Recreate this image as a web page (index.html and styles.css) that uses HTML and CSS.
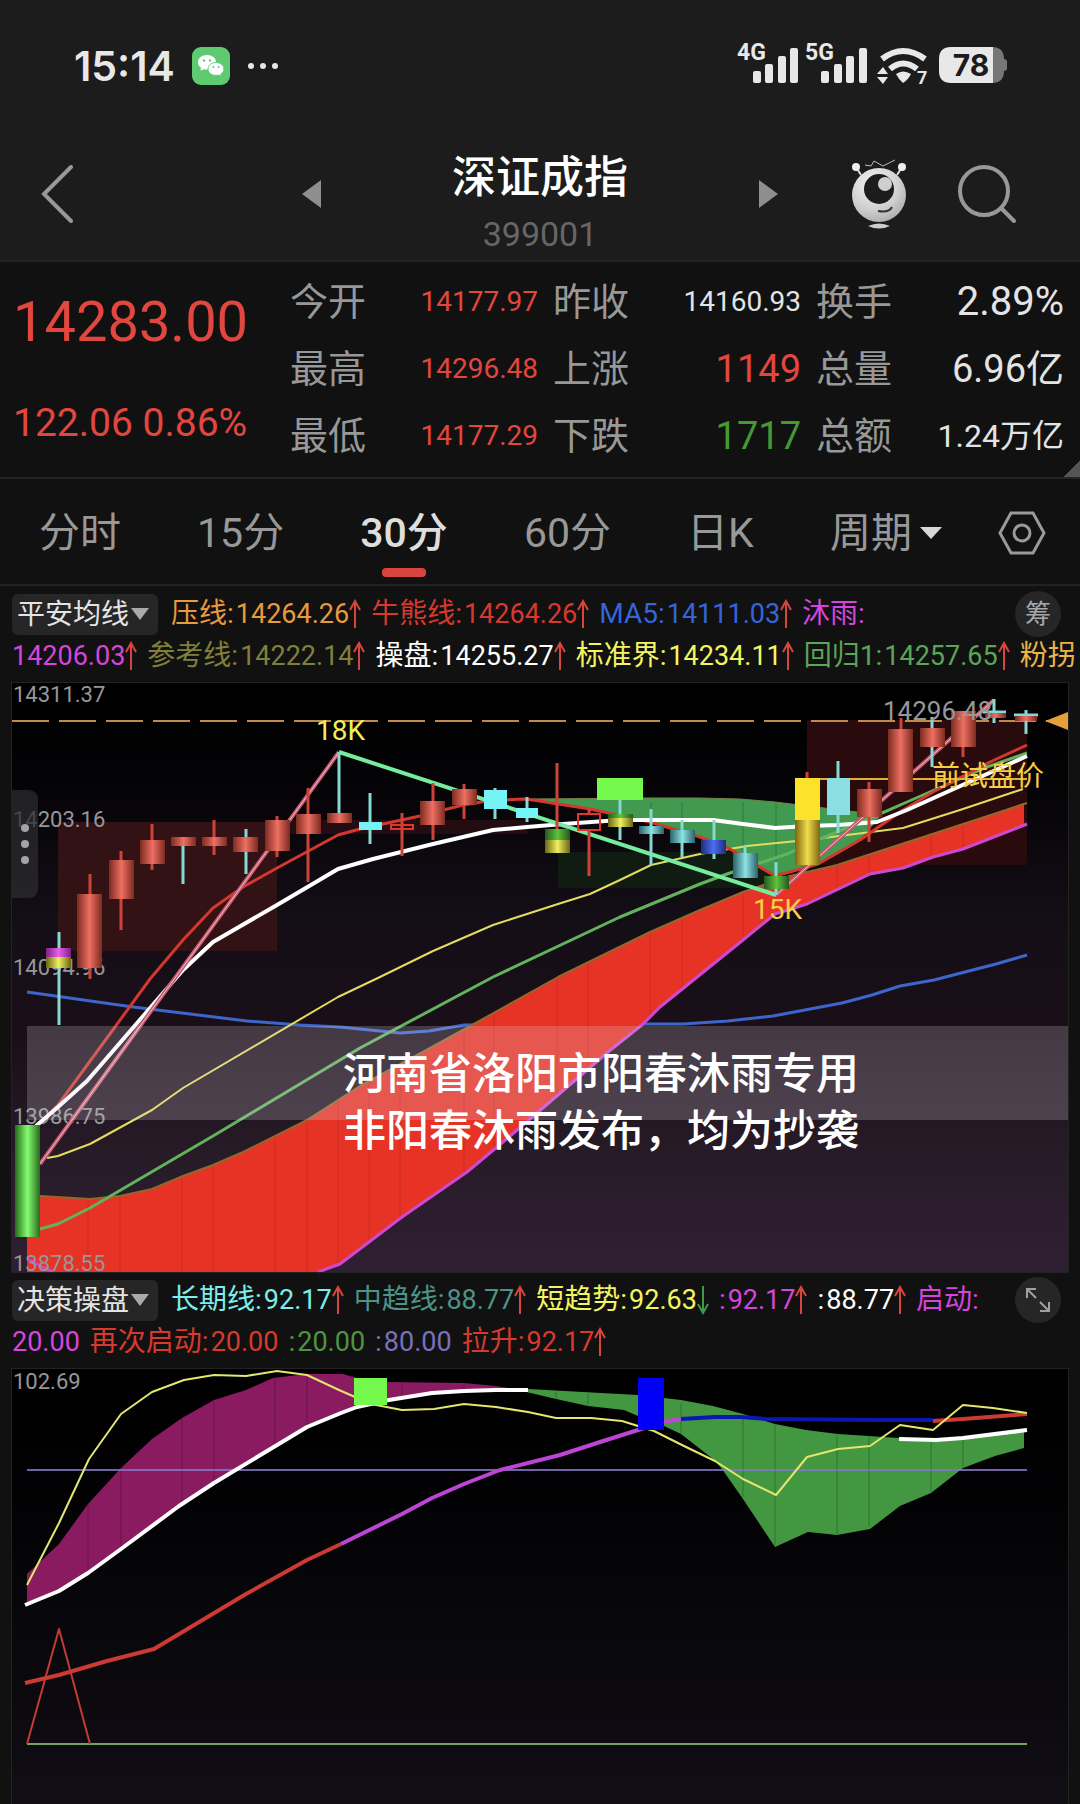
FILE: index.html
```html
<!DOCTYPE html>
<html lang="zh-CN">
<head>
<meta charset="utf-8">
<meta name="viewport" content="width=device-width, initial-scale=1">
<title>深证成指 399001</title>
<link rel="stylesheet" href="styles.css">
</head>
<body>
<header class="top">
  <div class="status">
    <div class="status-left">
      <span class="clock">15:14</span>
      <svg class="wechat" viewBox="0 0 38 38" aria-hidden="true">
        <rect width="38" height="38" rx="9" fill="#5fcb70"/>
        <path d="M15 8c-5.200 0-9 3.200-9 7.300 0 2.400 1.200 4.300 3.200 5.700l-.9 2.800 3.300-1.600c1 .3 2.200.4 3.400.4 5.200 0 9-3 9-7.300S20.200 8 15 8z" fill="#fff"/>
        <path d="M24 15.500c-4.600 0-8 2.800-8 6.500s3.400 6.400 8 6.400c1 0 2-.1 2.900-.4l2.700 1.400-.7-2.400c1.900-1.300 3-3 3-5 0-3.700-3.400-6.500-7.900-6.500z" fill="#fff" stroke="#5fcb70"/>
        <g fill="#5fcb70"><circle cx="12" cy="13.500" r="1.200"/><circle cx="18" cy="13.500" r="1.200"/><circle cx="21.500" cy="20" r="1"/><circle cx="26.500" cy="20" r="1"/></g>
      </svg>
      <svg class="dots" viewBox="0 0 32 8" aria-hidden="true"><g fill="#e6e6e6"><circle cx="4" cy="4" r="3"/><circle cx="16" cy="4" r="3"/><circle cx="28" cy="4" r="3"/></g></svg>
    </div>
    <svg class="radio" viewBox="0 0 280 60" role="img" aria-label="信号与电量">
      <g fill="#e8e8e8">
        <text x="7" y="24" class="net">4G</text>
        <rect x="23" y="35" width="8" height="12" rx="2"/><rect x="35" y="28" width="8" height="19" rx="2"/><rect x="48" y="20" width="8" height="27" rx="2"/><rect x="60" y="12" width="8" height="35" rx="2"/>
        <text x="75" y="24" class="net">5G</text>
        <rect x="91" y="35" width="8" height="12" rx="2"/><rect x="104" y="28" width="8" height="19" rx="2"/><rect x="116" y="20" width="8" height="27" rx="2"/><rect x="129" y="12" width="8" height="35" rx="2"/>
        <path d="M166 38Q173 33 181 38Q178 44 173 47Q169 44 166 38z"/>
        <path d="M147 38L153 31L158 38zM147 41L153 48L158 41z"/>
        <text x="187" y="48" class="gen">7</text>
        <path d="M260 11h2q12 0 12 12q3 0 3 3v6q0 3-3 3q0 12-12 12h-2z" fill="#777"/>
        <path d="M263 11H221q-12 0-12 12v12q0 12 12 12h42z"/>
        <text x="241" y="40" class="pct">78</text>
      </g>
      <path d="M152 23Q173 7 195 23M160 33Q173 22 187 33" fill="none" stroke="#e8e8e8" stroke-width="6"/>
    </svg>
  </div>
  <nav class="bar">
    <button class="icon-btn back" aria-label="返回"><svg width="34" height="58" viewBox="0 0 34 58"><path d="M31 2L4 29L31 56" fill="none" stroke="#989898" stroke-width="4" stroke-linecap="round"/></svg></button>
    <div class="switcher">
      <button class="icon-btn" aria-label="上一只"><svg width="20" height="28" viewBox="0 0 20 28"><path d="M20 0V28L1 14z" fill="#8e8e8e"/></svg></button>
      <div class="heading"><h1>深证成指</h1><span class="code">399001</span></div>
      <button class="icon-btn" aria-label="下一只"><svg width="20" height="28" viewBox="0 0 20 28"><path d="M0 0V28L19 14z" fill="#8e8e8e"/></svg></button>
    </div>
    <div class="tools">
      <button class="icon-btn" aria-label="智能助手"><svg width="56" height="70" viewBox="0 0 56 70">
        <defs><radialGradient id="ball" cx=".4" cy=".3" r=".8"><stop offset="0" stop-color="#f4f4f4"/><stop offset=".6" stop-color="#cfcfcf"/><stop offset="1" stop-color="#a4a4a4"/></radialGradient></defs>
        <path d="M5 8L10 16M51 8L46 16" stroke="#ddd" stroke-width="2"/>
        <path d="M14 6l6 1 3-5 9 5 12-6" fill="none" stroke="#bbb"/>
        <circle cx="5" cy="8" r="4" fill="#eee"/><circle cx="51" cy="8" r="4" fill="#eee"/>
        <circle cx="28" cy="36" r="27" fill="url(#ball)"/>
        <circle cx="28" cy="30" r="15" fill="#1c1c1c"/><circle cx="34" cy="25" r="7" fill="#cfcfcf"/>
        <path d="M27 52Q38 54 41 48" fill="none" stroke="#333" stroke-width="2"/>
        <path d="M17 67q11-5 22 0q-11 5-22 0z" fill="#ccc"/>
      </svg></button>
      <button class="icon-btn" aria-label="搜索"><svg width="60" height="60" viewBox="0 0 60 60" fill="none" stroke="#989898" stroke-width="4" stroke-linecap="round"><circle cx="27" cy="27" r="24"/><path d="M44 44L57 57"/></svg></button>
    </div>
  </nav>
</header>

<section class="quote">
  <div class="price"><strong>14283.00</strong><span>122.06 0.86%</span></div>
  <dl class="stats">
    <div><dt>今开</dt><dd class="s up">14177.97</dd></div>
    <div><dt>昨收</dt><dd class="s">14160.93</dd></div>
    <div><dt>换手</dt><dd class="l">2.89%</dd></div>
    <div><dt>最高</dt><dd class="s up">14296.48</dd></div>
    <div><dt>上涨</dt><dd class="m up">1149</dd></div>
    <div><dt>总量</dt><dd class="m">6.96亿</dd></div>
    <div><dt>最低</dt><dd class="s up">14177.29</dd></div>
    <div><dt>下跌</dt><dd class="m down">1717</dd></div>
    <div><dt>总额</dt><dd class="w">1.24万亿</dd></div>
  </dl>
  <span class="corner"></span>
</section>

<nav class="tabs">
  <button>分时</button><button>15分</button><button class="on">30分</button><button>60分</button><button>日K</button>
  <button>周期<svg width="22" height="14" viewBox="0 0 22 14"><path d="M0 1H22L11 13z" fill="#d8d8d8"/></svg></button>
  <button class="gear" aria-label="设置"><svg width="48" height="44" viewBox="0 0 48 44" fill="none" stroke="#9a9a9a" stroke-width="3"><path d="M13 2H35L46 22L35 42H13L2 22z"/><circle cx="24" cy="22" r="8"/></svg></button>
</nav>

<svg class="defs" aria-hidden="true">
  <symbol id="up" viewBox="0 0 12 30"><path d="M6 29V3M1 11L6 2L11 11" fill="none" stroke="#d8453c" stroke-width="2"/></symbol>
  <symbol id="down" viewBox="0 0 12 30"><path d="M6 1V27M1 19L6 28L11 19" fill="none" stroke="#3f9a48" stroke-width="2"/></symbol>
</svg>

<section class="ind">
  <div class="row">
    <button class="chip">平安均线<svg width="18" height="12" viewBox="0 0 18 12"><path d="M0 0H18L9 12z" fill="#aaa"/></svg></button>
    <span class="item orange">压线:<b>14264.26</b><svg><use href="#up"/></svg></span>
    <span class="item red">牛熊线:<b>14264.26</b><svg><use href="#up"/></svg></span>
    <span class="item blue">MA5:<b>14111.03</b><svg><use href="#up"/></svg></span>
    <span class="item violet">沐雨:</span>
    <button class="round">筹</button>
  </div>
  <div class="row">
    <span class="item violet first"><b>14206.03</b><svg><use href="#up"/></svg></span>
    <span class="item olive">参考线:<b>14222.14</b><svg><use href="#up"/></svg></span>
    <span class="item white">操盘:<b>14255.27</b><svg><use href="#up"/></svg></span>
    <span class="item yellow">标准界:<b>14234.11</b><svg><use href="#up"/></svg></span>
    <span class="item green">回归1:<b>14257.65</b><svg><use href="#up"/></svg></span>
    <span class="item gold">粉拐</span>
  </div>
</section>

<svg class="chart" viewBox="12 681 1056 589" role="img" aria-label="30分钟K线图">
  <defs>
    <linearGradient id="bg1" x2="0" y2="1"><stop offset="0" stop-color="#000"/><stop offset=".15" stop-color="#030204"/><stop offset=".4" stop-color="#140e17"/><stop offset=".6" stop-color="#1a0f18"/><stop offset=".8" stop-color="#271b28"/><stop offset="1" stop-color="#2f1f32"/></linearGradient>
    <linearGradient id="cr"><stop offset="0" stop-color="#7c2a1e"/><stop offset=".5" stop-color="#ee6f63"/><stop offset="1" stop-color="#7c2a1e"/></linearGradient>
    <linearGradient id="cg"><stop offset="0" stop-color="#246b1c"/><stop offset=".5" stop-color="#86fb70"/><stop offset="1" stop-color="#246b1c"/></linearGradient>
    <linearGradient id="cd"><stop offset="0" stop-color="#23591f"/><stop offset=".5" stop-color="#5fc23c"/><stop offset="1" stop-color="#23591f"/></linearGradient>
    <linearGradient id="cy"><stop offset="0" stop-color="#6a6414"/><stop offset=".5" stop-color="#eef060"/><stop offset="1" stop-color="#6a6414"/></linearGradient>
    <linearGradient id="co"><stop offset="0" stop-color="#7d6410"/><stop offset=".5" stop-color="#f3dc4c"/><stop offset="1" stop-color="#7d6410"/></linearGradient>
    <linearGradient id="cm"><stop offset="0" stop-color="#7d2087"/><stop offset=".5" stop-color="#e760ea"/><stop offset="1" stop-color="#7d2087"/></linearGradient>
    <linearGradient id="ct"><stop offset="0" stop-color="#2a6069"/><stop offset=".5" stop-color="#8be3e4"/><stop offset="1" stop-color="#2a6069"/></linearGradient>
    <linearGradient id="cb"><stop offset="0" stop-color="#1e2d80"/><stop offset=".5" stop-color="#4c6df0"/><stop offset="1" stop-color="#1e2d80"/></linearGradient>
  </defs>
  <rect x="12" y="681" width="1056" height="589" fill="url(#bg1)"/>
  <path d="M58 820H277V949H58z" fill="#331216"/>
  <path d="M277 818H528V832H277z" fill="#240c13"/>
  <path d="M558 850H776V886H558z" fill="#101c12"/>
  <path d="M807 718H1027V863H807z" fill="#290a0d"/>
  <g class="axis">
    <text x="13" y="700">14311.37</text><text x="13" y="825">14203.16</text><text x="13" y="973">14094.96</text><text x="13" y="1122">13986.75</text>
  </g>
  <path d="M12 719H1068" stroke="#c08a4a" stroke-width="2" stroke-dasharray="37 10"/>
  <path d="M1045 719L1068 710V728z" fill="#e5a03c"/>
  <path d="M530 797L643 796L700 796L740 797L775 800L857 810L885 809L860 838L818 862L775 874L730 847L700 835L650 820L590 807z" fill="#419a50"/>
  <path d="M530 797L643 796L700 796L740 797L775 800L857 810" fill="none" stroke="#75814a"/>
  <path d="M651 800V820M682 800V828M743 800V850M776 802V872" stroke="#2f7a3c"/>
  <g fill="none" stroke-linejoin="round">
    <path d="M27 990L133 1005L247 1019L300 1023L340 1025L400 1031L429 1029L464 1023L643 1022L683 1022L728 1019L773 1014L842 1001L872 993L900 984L934 978L996 962L1027 953" stroke="#3c66cc" stroke-width="3"/>
    <path d="M27 1195L40 1194L90 1197L120 1194L152 1187L183 1174L213 1163L243 1150L307 1118L360 1084L419 1052L472 1023L558 975L650 930L700 908L743 890L790 874L837 863L960 823L1024 801V823L963 847L933 855L903 866L870 872L807 902L775 912L743 938L660 1005L643 1022L608 1050L509 1135L467 1170L402 1215L340 1262L318 1270H27z" fill="#e63326"/>
    <path d="M88 1198V1270M120 1194V1270M182 1175V1270M213 1163V1270M275 1135V1270M307 1118V1270M338 1098V1262M369 1080V1240M400 1062V1216M464 1028V1172M494 1012V1148M557 976V1093M588 961V1067M650 930V1015M682 916V988M743 890V938M837 863V888M869 852V872M931 833V855M963 822V847" stroke="#c2281d" stroke-opacity=".7"/>
    <path d="M27 1195L40 1194L90 1197L120 1194L152 1187L183 1174L213 1163L243 1150L307 1118L360 1084L419 1052L472 1023L558 975L650 930L700 908L743 890L790 874L837 863L960 823L1027 801" stroke="#94672a" stroke-width="2"/>
    <path d="M27 1257L53 1270M318 1270L340 1262L402 1215L467 1170L509 1135L608 1050L643 1022L660 1005L743 938L775 912L807 902L870 872L903 866L933 855L963 847L1027 822" stroke="#cf48d2" stroke-width="3"/>
    <path d="M47 1156L58 1154L90 1142L152 1108L183 1086L338 995L380 975L433 949L493 923L558 902L590 892L620 878L651 863L700 852L747 844L807 838L903 826L960 808L1023 787" stroke="#e4dc5e" stroke-width="2"/>
    <path d="M40 1227L58 1222L90 1206L213 1134L360 1046L493 975L620 915L700 882L727 872L787 852L820 837L873 815L907 800L987 765L1027 751" stroke="#62b35c" stroke-width="3"/>
    <path d="M40 1121L58 1103L150 977L183 938L213 906L243 885L277 866L338 833L360 827L420 814L463 803L487 799L523 797L533 798L590 807L650 820L700 835L730 847L775 874L818 862L860 838L900 810L933 790L990 760L1027 743" stroke="#d2382e" stroke-width="3"/>
    <path d="M36 1124L58 1105L87 1079L183 968L213 940L277 903L338 867L373 857L433 842L493 828L527 825L563 822L620 818L667 818L713 818L743 822L775 826L807 824L838 823L877 820L907 808L1027 754" stroke="#fff" stroke-width="4"/>
    <path d="M40 1162L339 750M776 893L994 698" stroke="#c4586f" stroke-width="4"/>
    <path d="M40 1162L339 750M776 893L994 698" stroke="#efc0c6"/>
    <path d="M339 750L776 893" stroke="#76ec9f" stroke-width="4"/>
  </g>
  <path d="M807 777H1027" stroke="#e3b035" stroke-width="2"/>
  <path d="M90 872V977M121 849V928M152 822V868M214 818V853M277 814V855M308 786V880M402 811V854M433 781V838M464 782V817M557 761V850M589 806V812M589 828V874M807 770V776M869 780V840M901 716V790M963 709V755" stroke="#cf4238" stroke-width="3"/>
  <path d="M59 930V1023M183 840V882M246 827V872M339 750V811M370 791V842M495 786V817M527 795V820M620 797V838M651 807V863M682 818V855M714 818V857M745 844V876M776 860V893M838 759V831M932 715V765M994 697V721M1026 708V732M983 710H1006M1014 713H1038" stroke="#86d8d3" stroke-width="3"/>
  <rect x="15" y="1123" width="25" height="112" fill="url(#cg)"/>
  <rect x="46" y="946" width="25" height="10" fill="url(#cm)"/><rect x="46" y="955" width="25" height="11" fill="url(#cy)"/>
  <g fill="url(#cr)">
    <rect x="77" y="892" width="25" height="74"/><rect x="109" y="858" width="25" height="39"/><rect x="140" y="838" width="25" height="24"/><rect x="171" y="835" width="25" height="9"/><rect x="202" y="835" width="25" height="9"/><rect x="233" y="835" width="25" height="15"/><rect x="265" y="818" width="25" height="31"/><rect x="296" y="812" width="25" height="20"/><rect x="327" y="811" width="25" height="10"/><rect x="420" y="799" width="25" height="24"/><rect x="452" y="787" width="25" height="16"/><rect x="857" y="787" width="25" height="28"/><rect x="888" y="727" width="25" height="63"/><rect x="920" y="726" width="25" height="19"/><rect x="951" y="709" width="25" height="36"/><rect x="985" y="711" width="21" height="5"/><rect x="1015" y="714" width="22" height="5"/>
  </g>
  <g fill="#75f4f7"><rect x="359" y="820" width="23" height="8"/><rect x="484" y="788" width="23" height="19"/><rect x="516" y="806" width="22" height="10"/><rect x="827" y="776" width="23" height="37" fill="#89dfe2"/></g>
  <path d="M391 823H413V827H391zM578 812H600V828H578z" fill="none" stroke="#e2362c" stroke-width="2"/>
  <rect x="545" y="827" width="25" height="11" fill="url(#cd)"/><rect x="545" y="838" width="25" height="13" fill="url(#cy)"/>
  <rect x="608" y="812" width="25" height="5" fill="url(#cd)"/><rect x="608" y="816" width="25" height="9" fill="url(#cy)"/>
  <rect x="597" y="776" width="46" height="22" fill="#75f84c"/>
  <g fill="url(#ct)"><rect x="639" y="824" width="25" height="8"/><rect x="670" y="828" width="25" height="13"/><rect x="733" y="851" width="25" height="25"/></g>
  <rect x="701" y="838" width="25" height="14" fill="url(#cb)"/><rect x="764" y="874" width="25" height="13" fill="url(#cd)"/>
  <rect x="795" y="776" width="25" height="42" fill="#fbe32c"/><rect x="795" y="818" width="25" height="45" fill="url(#co)"/>
  <rect x="27" y="1024" width="1041" height="94" fill="#e8e0ea" fill-opacity=".21"/>
  <path d="M12 788H28q10 0 10 10V886q0 10-10 10H12z" fill="#2b2b2d" fill-opacity=".75"/>
  <g fill="#a4a4a6"><circle cx="25" cy="826" r="4"/><circle cx="25" cy="842" r="4"/><circle cx="25" cy="858" r="4"/></g>
  <text class="axis" x="13" y="1269">13878.55</text>
  <text class="high" x="883" y="718">14296.48</text>
  <text class="mark" x="316" y="738">18K</text><text class="mark amber" x="753" y="917">15K</text><text class="mark amber" x="932" y="784">前试盘价</text>
  <text class="stamp" x="343" y="1087">河南省洛阳市阳春沐雨专用</text><text class="stamp" x="343" y="1144">非阳春沐雨发布，均为抄袭</text>
</svg>

<section class="ind">
  <div class="row">
    <button class="chip">决策操盘<svg width="18" height="12" viewBox="0 0 18 12"><path d="M0 0H18L9 12z" fill="#aaa"/></svg></button>
    <span class="item cyan">长期线:<b>92.17</b><svg><use href="#up"/></svg></span>
    <span class="item teal">中趋线:<b>88.77</b><svg><use href="#up"/></svg></span>
    <span class="item yellow">短趋势:<b>92.63</b><svg><use href="#down"/></svg></span>
    <span class="item violet">:<b>92.17</b><svg><use href="#up"/></svg></span>
    <span class="item white">:<b>88.77</b><svg><use href="#up"/></svg></span>
    <span class="item violet">启动:</span>
    <button class="round" aria-label="展开"><svg width="26" height="26" viewBox="0 0 26 26" fill="none" stroke="#a0a0a0" stroke-width="2"><path d="M2 11V2H11M2 2L11 11M24 15V24H15M24 24L15 15"/></svg></button>
  </div>
  <div class="row">
    <span class="item violet first"><b>20.00</b></span>
    <span class="item red">再次启动:<b>20.00</b></span>
    <span class="item moss">:<b>20.00</b></span>
    <span class="item slate">:<b>80.00</b></span>
    <span class="item red">拉升:<b>92.17</b><svg><use href="#up"/></svg></span>
  </div>
</section>

<svg class="chart" viewBox="12 1368 1056 436" role="img" aria-label="决策操盘指标图">
  <defs><linearGradient id="bg2" x2="0" y2="1"><stop offset="0" stop-color="#000"/><stop offset=".3" stop-color="#020204"/><stop offset="1" stop-color="#110e15"/></linearGradient></defs>
  <rect x="12" y="1368" width="1056" height="436" fill="url(#bg2)"/>
  <path d="M27 1573L59 1543L88 1503L121 1467L152 1438L182 1417L214 1399L246 1389L273 1377L307 1373L343 1373L357 1377L387 1381L464 1382L496 1385L514 1388L464 1390L432 1392L389 1399L341 1412L307 1426L214 1482L179 1505L121 1548L88 1572L59 1590L27 1603z" fill="#8a1b61"/>
  <path d="M88 1505V1572M121 1468V1548M182 1418V1503M214 1400V1482M275 1377V1445M307 1373V1426M402 1381V1396M464 1382V1390" stroke="#681248"/>
  <path d="M528 1388L638 1394L681 1399L713 1405L743 1413L775 1423L806 1429L838 1433L899 1437L936 1438L963 1436L1024 1431V1447L995 1455L963 1467L931 1492L900 1505L870 1528L837 1534L808 1531L775 1546L743 1498L722 1468L713 1458L681 1433L664 1425L638 1415L624 1409L588 1405L556 1398L518 1389z" fill="#429740"/>
  <path d="M556 1391V1398M588 1393V1404M681 1402V1432M743 1415V1496M775 1424V1544M837 1434V1533M869 1436V1526M931 1440V1491M963 1439V1466" stroke="#2f7430"/>
  <g fill="none" stroke-linejoin="round">
    <path d="M27 1469H1027" stroke="#8476c4" stroke-opacity=".85" stroke-width="2"/>
    <path d="M27 1743H1027" stroke="#76a365" stroke-width="2"/>
    <path d="M27 1743L59 1628L90 1743" stroke="#c03c35" stroke-width="2"/>
    <path d="M25 1682L59 1674L107 1660L154 1648L246 1593L307 1559L341 1543" stroke="#cc3a34" stroke-width="4"/>
    <path d="M341 1543L402 1513L432 1497L464 1483L500 1469L560 1454L597 1442L638 1429L663 1421L681 1418" stroke="#bd45d6" stroke-width="4"/>
    <path d="M681 1418L715 1416L741 1416L766 1418L877 1419L933 1419" stroke="#0b17b4" stroke-width="4"/>
    <path d="M933 1420L963 1418L1027 1413" stroke="#cc3a34" stroke-width="4"/>
    <path d="M27 1584L59 1522L89 1458L121 1413L152 1391L184 1379L214 1374L246 1375L277 1370L307 1374L339 1389L371 1403L402 1409L434 1408L464 1403L496 1406L528 1411L556 1417L591 1417L622 1420L638 1425L654 1430L684 1445L715 1460L743 1478L776 1494L807 1456L838 1448L870 1445L900 1424L933 1429L963 1404L993 1407L1027 1412" stroke="#e4e670" stroke-width="2"/>
    <path d="M25 1604L59 1590L88 1572L121 1548L179 1505L214 1482L307 1426L341 1412L357 1406L389 1399L432 1392L464 1390L496 1389L528 1389M899 1438L936 1439L963 1437L1027 1429" stroke="#fff" stroke-width="4"/>
  </g>
  <rect x="354" y="1377" width="33" height="27" fill="#75f84c"/><rect x="638" y="1377" width="26" height="52" fill="#0000f6"/>
  <text class="axis" x="13" y="1388">102.69</text>
</svg>
</body>
</html>
```

FILE: styles.css
```css
* { box-sizing: border-box; }
body {
  margin: 0;
  background: #111;
  color: #e4e4e4;
  font-family: Roboto, "Noto Sans CJK SC", sans-serif;
  overflow-x: hidden;
}
button {
  margin: 0;
  padding: 0;
  border: 0;
  background: none;
  color: inherit;
  font: inherit;
}
svg { display: block; flex: none; }

.top { background: #1c1c1c; border-bottom: 2px solid #232323; }
.status {
  display: flex;
  justify-content: space-between;
  align-items: center;
  height: 132px;
  padding: 0 70px 0 74px;
}
.status-left { display: flex; align-items: center; gap: 17px; }
.clock { font: 600 41px/46px Inter, sans-serif; color: #e8e8e8; }
.wechat { width: 38px; height: 38px; }
.dots { width: 32px; height: 8px; }
.radio { width: 280px; height: 60px; }
.net { font: 700 23px Roboto, sans-serif; }
.gen { font: 700 18px Roboto, sans-serif; }
.pct { font: 700 30px Inter, sans-serif; fill: #1c1c1c; text-anchor: middle; }

.bar {
  display: grid;
  grid-template-columns: 1fr 478px 1fr;
  align-items: center;
  height: 128px;
  padding-bottom: 4px;
}
.back { justify-self: start; padding-left: 40px; }
.switcher { display: flex; justify-content: space-between; align-items: center; }
.heading {
  display: flex;
  flex-direction: column;
  align-items: center;
  gap: 8px;
  padding-top: 20px;
}
h1 { margin: 0; font-size: 44px; line-height: 52px; font-weight: 500; color: #fff; }
.code { font-size: 34px; line-height: 44px; color: #666; }
.tools {
  display: flex;
  justify-content: flex-end;
  align-items: center;
  gap: 50px;
  padding-right: 63px;
}

.quote {
  position: relative;
  display: flex;
  padding: 8px 16px 5px 13px;
  border-bottom: 2px solid #242424;
}
.price { flex: 0 0 277px; color: #e2473f; }
.price strong { display: block; font-size: 56px; line-height: 104px; font-weight: 400; }
.price span { display: block; font-size: 39px; line-height: 98px; }
.stats {
  flex: 1;
  display: grid;
  grid-template-columns: repeat(3, 1fr);
  grid-auto-rows: 67px;
  column-gap: 15px;
  margin: 0;
}
.stats div {
  display: flex;
  justify-content: space-between;
  align-items: center;
  height: 64px;
  line-height: 44px;
}
dt { font-size: 38px; color: #989898; }
dd { margin: 0; }
.s { font-size: 28px; }
.m { font-size: 38px; }
.l { font-size: 40px; }
.w { font-size: 32px; }
.up { color: #e2473f; }
.down { color: #459a32; }
.corner {
  position: absolute;
  right: 0;
  bottom: 0;
  width: 16px;
  height: 16px;
  background: linear-gradient(135deg, transparent 50%, #555 50%);
}

.tabs {
  display: flex;
  justify-content: space-between;
  align-items: center;
  height: 107px;
  padding: 2px 34px 0 39px;
  border-bottom: 2px solid #222;
  color: #989898;
  font-size: 41px;
}
.tabs button { position: relative; display: flex; align-items: center; gap: 8px; line-height: 60px; }
.tabs .gear { margin-left: -20px; }
.tabs .on { color: #dedede; font-weight: 500; }
.on::after {
  content: "";
  position: absolute;
  left: 50%;
  bottom: -14px;
  width: 44px;
  height: 9px;
  margin-left: -22px;
  border-radius: 4px;
  background: #d8443e;
}

.defs { position: absolute; width: 0; height: 0; }
.ind { padding: 7px 0 6px 12px; overflow: hidden; }
.row {
  display: flex;
  align-items: center;
  gap: 10px;
  height: 42px;
  font-size: 28px;
  line-height: 42px;
  white-space: nowrap;
}
.chip {
  display: flex;
  align-items: center;
  gap: 2px;
  width: 146px;
  margin-right: 3px;
  padding-left: 5px;
  border-radius: 6px;
  background: #262626;
  line-height: 41px;
  flex: none;
}
.item { display: flex; align-items: center; flex: none; }
.item b { margin-left: 2px; font-size: 27px; font-weight: 400; }
.item svg { width: 12px; height: 30px; }
.first b { margin-left: 0; }
.round {
  display: flex;
  align-items: center;
  justify-content: center;
  width: 46px;
  height: 46px;
  margin-left: auto;
  margin-right: 19px;
  border-radius: 50%;
  background: #262626;
  color: #a8a8a8;
  font-size: 26px;
  flex: none;
}
.orange { color: #e89a3e; }
.red { color: #d8392f; }
.blue { color: #3565d8; }
.violet { color: #d545dc; }
.olive { color: #80803a; }
.white { color: #fff; }
.yellow { color: #f3f560; }
.green { color: #5aa556; }
.gold { color: #e9b548; }
.cyan { color: #7bedec; }
.teal { color: #4d9388; }
.moss { color: #4f9440; }
.slate { color: #7a70bc; }

.chart {
  width: calc(100% - 24px);
  height: auto;
  margin: 0 12px;
  outline: 1px solid #222;
  overflow: visible;
}
.axis { font-size: 22px; fill: #97979a; }
.high { font-size: 26px; fill: #97979a; }
.mark { font-size: 28px; fill: #f1f05c; }
.amber { fill: #f6cf45; }
.stamp { font-size: 43px; font-weight: 500; fill: #fff; }
```
